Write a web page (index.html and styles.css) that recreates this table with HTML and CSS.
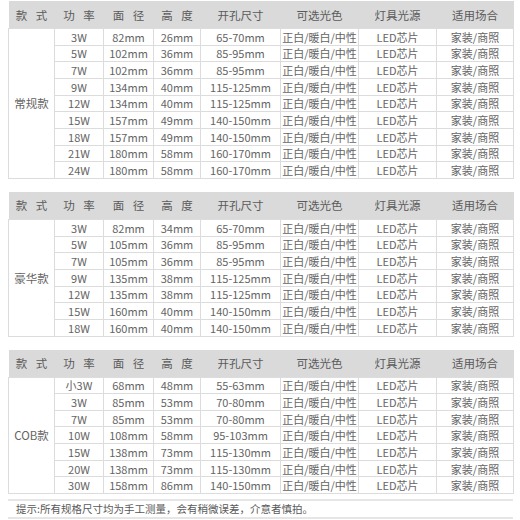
FILE: index.html
```html
<!DOCTYPE html>
<html lang="zh">
<head>
<meta charset="utf-8">
<link rel="stylesheet" href="styles.css">
</head>
<body>
<div class="page">
  <table class="spec">
    <colgroup><col class="c1"><col class="c2"><col class="c3"><col class="c4"><col class="c5"><col class="c6"><col class="c7"><col class="c8"></colgroup>
    <thead>
      <tr><th class="sp">款 式</th><th class="sp">功 率</th><th class="sp">面 径</th><th class="sp">高 度</th><th>开孔尺寸</th><th>可选光色</th><th>灯具光源</th><th>适用场合</th></tr>
    </thead>
    <tbody>
      <tr><td class="kind" rowspan="9">常规款</td><td>3W</td><td>82mm</td><td>26mm</td><td>65-70mm</td><td>正白/暖白/中性</td><td>LED芯片</td><td>家装/商照</td></tr>
      <tr><td>5W</td><td>102mm</td><td>36mm</td><td>85-95mm</td><td>正白/暖白/中性</td><td>LED芯片</td><td>家装/商照</td></tr>
      <tr><td>7W</td><td>102mm</td><td>36mm</td><td>85-95mm</td><td>正白/暖白/中性</td><td>LED芯片</td><td>家装/商照</td></tr>
      <tr><td>9W</td><td>134mm</td><td>40mm</td><td>115-125mm</td><td>正白/暖白/中性</td><td>LED芯片</td><td>家装/商照</td></tr>
      <tr><td>12W</td><td>134mm</td><td>40mm</td><td>115-125mm</td><td>正白/暖白/中性</td><td>LED芯片</td><td>家装/商照</td></tr>
      <tr><td>15W</td><td>157mm</td><td>49mm</td><td>140-150mm</td><td>正白/暖白/中性</td><td>LED芯片</td><td>家装/商照</td></tr>
      <tr><td>18W</td><td>157mm</td><td>49mm</td><td>140-150mm</td><td>正白/暖白/中性</td><td>LED芯片</td><td>家装/商照</td></tr>
      <tr><td>21W</td><td>180mm</td><td>58mm</td><td>160-170mm</td><td>正白/暖白/中性</td><td>LED芯片</td><td>家装/商照</td></tr>
      <tr><td>24W</td><td>180mm</td><td>58mm</td><td>160-170mm</td><td>正白/暖白/中性</td><td>LED芯片</td><td>家装/商照</td></tr>
    </tbody>
  </table>

  <table class="spec">
    <colgroup><col class="c1"><col class="c2"><col class="c3"><col class="c4"><col class="c5"><col class="c6"><col class="c7"><col class="c8"></colgroup>
    <thead>
      <tr><th class="sp">款 式</th><th class="sp">功 率</th><th class="sp">面 径</th><th class="sp">高 度</th><th>开孔尺寸</th><th>可选光色</th><th>灯具光源</th><th>适用场合</th></tr>
    </thead>
    <tbody>
      <tr><td class="kind" rowspan="7">豪华款</td><td>3W</td><td>82mm</td><td>34mm</td><td>65-70mm</td><td>正白/暖白/中性</td><td>LED芯片</td><td>家装/商照</td></tr>
      <tr><td>5W</td><td>105mm</td><td>36mm</td><td>85-95mm</td><td>正白/暖白/中性</td><td>LED芯片</td><td>家装/商照</td></tr>
      <tr><td>7W</td><td>105mm</td><td>36mm</td><td>85-95mm</td><td>正白/暖白/中性</td><td>LED芯片</td><td>家装/商照</td></tr>
      <tr><td>9W</td><td>135mm</td><td>38mm</td><td>115-125mm</td><td>正白/暖白/中性</td><td>LED芯片</td><td>家装/商照</td></tr>
      <tr><td>12W</td><td>135mm</td><td>38mm</td><td>115-125mm</td><td>正白/暖白/中性</td><td>LED芯片</td><td>家装/商照</td></tr>
      <tr><td>15W</td><td>160mm</td><td>40mm</td><td>140-150mm</td><td>正白/暖白/中性</td><td>LED芯片</td><td>家装/商照</td></tr>
      <tr><td>18W</td><td>160mm</td><td>40mm</td><td>140-150mm</td><td>正白/暖白/中性</td><td>LED芯片</td><td>家装/商照</td></tr>
    </tbody>
  </table>

  <table class="spec">
    <colgroup><col class="c1"><col class="c2"><col class="c3"><col class="c4"><col class="c5"><col class="c6"><col class="c7"><col class="c8"></colgroup>
    <thead>
      <tr><th class="sp">款 式</th><th class="sp">功 率</th><th class="sp">面 径</th><th class="sp">高 度</th><th>开孔尺寸</th><th>可选光色</th><th>灯具光源</th><th>适用场合</th></tr>
    </thead>
    <tbody>
      <tr><td class="kind" rowspan="7">COB款</td><td>小3W</td><td>68mm</td><td>48mm</td><td>55-63mm</td><td>正白/暖白/中性</td><td>LED芯片</td><td>家装/商照</td></tr>
      <tr><td>3W</td><td>85mm</td><td>53mm</td><td>70-80mm</td><td>正白/暖白/中性</td><td>LED芯片</td><td>家装/商照</td></tr>
      <tr><td>7W</td><td>85mm</td><td>53mm</td><td>70-80mm</td><td>正白/暖白/中性</td><td>LED芯片</td><td>家装/商照</td></tr>
      <tr><td>10W</td><td>108mm</td><td>58mm</td><td>95-103mm</td><td>正白/暖白/中性</td><td>LED芯片</td><td>家装/商照</td></tr>
      <tr><td>15W</td><td>138mm</td><td>73mm</td><td>115-130mm</td><td>正白/暖白/中性</td><td>LED芯片</td><td>家装/商照</td></tr>
      <tr><td>20W</td><td>138mm</td><td>73mm</td><td>115-130mm</td><td>正白/暖白/中性</td><td>LED芯片</td><td>家装/商照</td></tr>
      <tr><td>30W</td><td>158mm</td><td>86mm</td><td>140-150mm</td><td>正白/暖白/中性</td><td>LED芯片</td><td>家装/商照</td></tr>
    </tbody>
  </table>

  <div class="note">提示:所有规格尺寸均为手工测量，会有稍微误差，介意者慎拍。</div>
</div>
</body>
</html>
```

FILE: styles.css
```css
html, body {
  margin: 0;
  padding: 0;
  background: #ffffff;
}

.page {
  padding: 1px 7px 0 8px;
  font-family: "Noto Sans CJK SC", "Noto Sans", sans-serif;
  color: #646464;
}

.spec {
  width: 505px;
  table-layout: fixed;
  border-collapse: collapse;
  margin-bottom: 13px;
  font-size: 11px;
}

.spec:nth-of-type(3) {
  margin-bottom: 5px;
}

.c1 { width: 46px; }
.c2 { width: 49px; }
.c3 { width: 50px; }
.c4 { width: 47px; }
.c5 { width: 80px; }
.c6 { width: 78px; }
.c7 { width: 78px; }
.c8 { width: 77px; }

.spec th {
  height: 27px;
  padding: 0;
  background: #dadada;
  font-weight: normal;
  font-size: 11.5px;
  color: #5a5a5a;
  text-align: center;
  vertical-align: middle;
  white-space: nowrap;
}

.spec th.sp {
  letter-spacing: 3px;
  text-indent: 3px;
}

.spec td {
  height: 15.67px;
  padding: 0;
  border: 1px solid #dcdcdc;
  text-align: center;
  vertical-align: middle;
  line-height: 14px;
  white-space: nowrap;
}

.spec td.kind {
  font-size: 11.5px;
}

.note {
  width: 505px;
  box-sizing: border-box;
  height: 20px;
  border-top: 2px solid #e6e6e6;
  border-bottom: 2px solid #e6e6e6;
  padding-left: 8px;
  font-size: 10.5px;
  line-height: 16px;
  color: #595959;
}
```
